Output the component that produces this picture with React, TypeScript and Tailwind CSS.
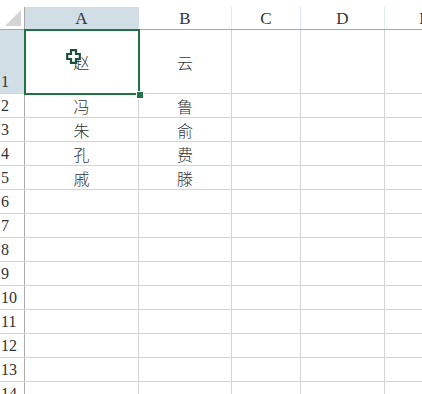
const cols = [
  { key: 'A', w: 'w-[114px]', active: true },
  { key: 'B', w: 'w-[93px]', active: false },
  { key: 'C', w: 'w-[69px]', active: false },
  { key: 'D', w: 'w-[84px]', active: false },
  { key: 'E', w: 'w-[80px]', active: false },
]

const data: Record<number, string[]> = {
  1: ['赵', '云'],
  2: ['冯', '鲁'],
  3: ['朱', '俞'],
  4: ['孔', '费'],
  5: ['戚', '滕'],
}

const rows = Array.from({ length: 14 }, (_, i) => i + 1)

function Cursor() {
  return (
    <svg width="15" height="15" viewBox="0 0 15 15" className="absolute left-[66px] top-[49px]">
      <path
        d="M5 1.2h5v3.8h3.8v5H10v3.8H5V10H1.2V5H5z"
        fill="#fff"
        stroke="#1e4d3a"
        strokeWidth="2.2"
        strokeLinejoin="miter"
      />
    </svg>
  )
}

export default function App() {
  return (
    <div className="relative w-[422px] h-[394px] overflow-hidden bg-white font-['Liberation_Serif',serif] text-[#333]">
      <div className="h-[7px]" />
      {/* header row */}
      <div className="flex h-[23px] border-b border-[#a8a8a8]">
        <div className="w-[25px] shrink-0 border-r border-[#a8a8a8] flex items-end justify-end pr-[3px] pb-[3px]">
          <svg width="16" height="16" viewBox="0 0 16 16">
            <polygon points="16,0 16,16 0,16" fill="#d4d4d4" />
          </svg>
        </div>
        {cols.map((c) => (
          <div
            key={c.key}
            className={`${c.w} shrink-0 flex items-center justify-center text-[17px] leading-none pt-[1px] ${
              c.active ? 'bg-[#d2dee5] border-r border-[#d2dee5]' : 'border-r border-[#dcebf0]'
            }`}
          >
            {c.key}
          </div>
        ))}
      </div>
      {/* body rows */}
      {rows.map((r) => (
        <div key={r} className={`flex border-b border-[#d4d4d4] ${r === 1 ? 'h-[64px]' : 'h-[24px]'}`}>
          <div
            className={`w-[25px] shrink-0 border-r border-[#ababab] flex pl-[1px] text-[16px] leading-none ${
              r === 1 ? 'bg-[#d2dee5] items-end pb-[3px]' : 'items-center'
            }`}
          >
            {r}
          </div>
          {cols.map((c, ci) => (
            <div
              key={c.key}
              className={`${c.w} shrink-0 border-r border-[#d4d4d4] flex items-center justify-center text-[16px] leading-none font-['Noto_Sans_CJK_SC',sans-serif] font-light`}
            >
              {ci < 2 ? data[r]?.[ci] : ''}
            </div>
          ))}
        </div>
      ))}
      {/* selection */}
      <div className="absolute left-[24px] top-[29px] w-[116px] h-[66px] border-2 border-[#217346]" />
      <div className="absolute left-[136px] top-[91px] w-[6px] h-[6px] bg-[#217346] border border-white box-content" />
      <Cursor />
    </div>
  )
}
